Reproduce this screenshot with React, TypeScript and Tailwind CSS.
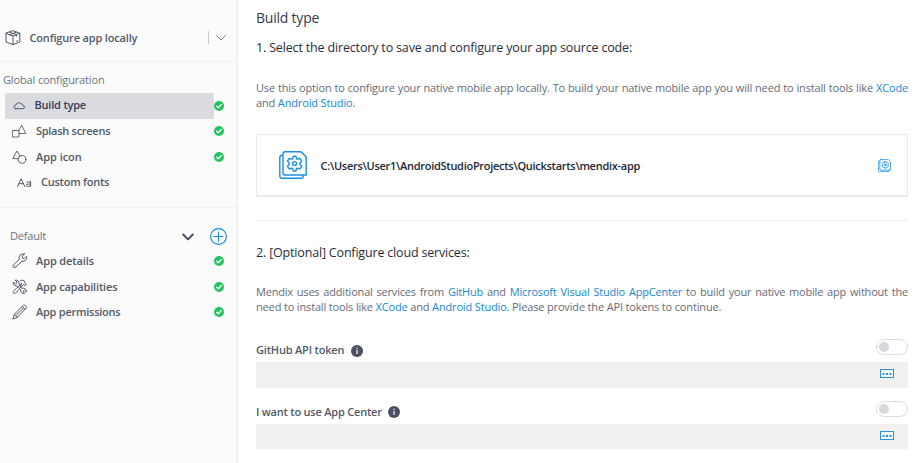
import type { ReactNode } from 'react';

function Svg({ w, h, box, className = '', sw = 1, children }: { w: number; h: number; box?: string; className?: string; sw?: number; children: ReactNode }) {
  return (
    <svg width={w} height={h} viewBox={box ?? `0 0 ${w} ${h}`} fill="none" stroke="currentColor" strokeWidth={sw} strokeLinejoin="round" strokeLinecap="round" className={`shrink-0 ${className}`}>
      {children}
    </svg>
  );
}

const BoxIcon = () => (
  <Svg w={16} h={16} sw={1}>
    <path d="M8 .8 L14.8 3.2 V12 L8 14.6 L1 12 V3.4 Z M1 3.4 L8 6 L14.8 3.2 M8 6 V14.6 M4.5 2.2 L11.3 4.6 V6.5 M4.6 4.7 L11.4 2.2 M11.6 11.2 L12.8 10.8" />
  </Svg>
);
const CloudIcon = () => (
  <Svg w={12} h={9} sw={0.8}>
    <path d="M2.8 7.7 H9.8 A1.6 1.6 0 0 0 9.9 4.5 A1.8 1.8 0 0 0 8 2.8 A2.8 2.8 0 0 0 3 4 A1.85 1.85 0 0 0 2.8 7.7 Z" />
  </Svg>
);
const SplashIcon = () => (
  <Svg w={15} h={15} sw={0.9}>
    <path d="M.8 6.5 H7 V13 H.8 Z M7 9.5 H13.7 L9.7 1.2 L6.9 6.5" />
  </Svg>
);
const ShapesIcon = () => (
  <Svg w={15} h={15} sw={0.9}>
    <path d="M6.6 8.6 H.8 L5 1 L8.2 6.2" />
    <circle cx="10" cy="9.4" r="3.9" />
  </Svg>
);
const WrenchIcon = () => (
  <Svg w={16} h={16} sw={1}>
    <path d="M12.2 1 L10.2 3.4 L10.7 5.2 L12.3 5.6 L14.5 3.3 C15.4 6.6 13 8.9 9.9 8.1 L4 14 C2.2 15.7 -.2 13.5 1.5 11.8 L7.3 6.3 C6.3 3 8.9 .3 12.2 1 Z" />
    <path d="M2.8 12.7 H2.9" />
  </Svg>
);
const ToolsIcon = () => (
  <Svg w={16} h={16} sw={1}>
    <path d="M3.2 1.2 L5 3 L4.6 4.4 L3.2 4.8 L1.3 3 C.6 5.5 2.4 7.2 4.8 6.8 L6.1 8 M8.2 6 L7 4.9 C7.4 2.4 5.7 .6 3.2 1.2" />
    <path d="M8.2 2 L10 1 L12 1.6 L12.8 3.6 L14.4 5 L13.2 6.6 L11.3 5.6 L8.6 8.6 M7 10.3 L3.7 14.1 C2.4 15.6 .1 13.5 1.5 12.1 L9.6 4.3 Z" />
    <path d="M9.2 8.6 L10 9.3 C12.6 8.6 14.8 10.4 14.3 13 L12.4 11.3 L11 12.2 L12.6 14.4 C10 15 8.2 13 8.8 10.7 L7.6 9.6" />
  </Svg>
);
const PencilIcon = () => (
  <Svg w={16} h={16} sw={1}>
    <path d="M1 14.7 L2.3 10.3 L11.3 1.4 C12.5 .3 15.2 2.8 14.1 4.2 L5.4 13.2 Z M2.3 10.3 L5.4 13.2 M10.2 2.5 L13 5.3 M3.8 11.6 L11.6 3.9" />
  </Svg>
);
const FontIcon = () => (
  <Svg w={15} h={10} sw={1}>
    <path d="M.6 8.6 L4.1 .8 L7.8 8.6 M2 5.7 H6.4 M13.6 3.8 V8.6 M9.6 4.2 Q11 3.3 13.6 4 M13.6 6 H11 Q9.2 6.2 9.3 7.4 Q9.7 8.6 11.2 8.5 Q12.8 8.3 13.6 7.2" />
  </Svg>
);
const Check = () => (
  <Svg w={10} h={10} sw={1.4} className="text-white">
    <circle cx="5" cy="5" r="5" fill="#22c55e" stroke="none" />
    <path d="M2.7 5.2 L4.3 6.7 L7.3 3.6" />
  </Svg>
);
const Directory = ({ size, sw }: { size: number; sw: number }) => (
  <Svg w={size} h={size} box="0 0 28 28" sw={sw} className="text-[#1a8fe3]">
    <path d="M6 .8 H22 L27.2 6 V24 H6 Q4 24 4 22 V3 Q4 .8 6 .8 Z M4 4.3 H3 Q.8 4.3 .8 6.5 V25 Q.8 27.2 3 27.2 H22 Q24.2 27.2 24.2 25 V24" />
    <path d="M14.4 5.2 H16.8 L17.8 8.1 L20.9 7.5 L22.7 9.9 L20.8 12.6 L22.7 15.4 L20.9 17.8 L17.8 17.2 L16.8 20 H14.4 L13.4 17.2 L10.3 17.8 L8.5 15.4 L10.4 12.6 L8.5 9.9 L10.3 7.5 L13.4 8.1 Z" />
    <circle cx="15.6" cy="12.6" r="2" />
  </Svg>
);

function Item({ icon, label, done = true, iconPad = 'pl-3', track }: { icon: ReactNode; label: string; done?: boolean; iconPad?: string; track: string }) {
  return (
    <div className={`flex h-[25.6px] items-center pr-[12px] ${iconPad}`}>
      <span className="flex w-6 shrink-0 items-center">{icon}</span>
      <span className={`grow text-[11px] font-semibold ${track}`}>{label}</span>
      {done && <Check />}
    </div>
  );
}

const Link = ({ children }: { children: ReactNode }) => <a className="text-[#1787d8]">{children}</a>;

function Field({ label, track }: { label: string; track: string }) {
  return (
    <div className="h-[61.5px]">
      <div className="flex h-[23px] items-start justify-between">
        <div className="flex h-[23px] items-center gap-[6.5px] text-[11px] font-semibold text-[#525968]">
          <span className={track}>{label}</span>
          <svg width="12" height="12" viewBox="0 0 12 12">
            <circle cx="6" cy="6" r="6" fill="#4b5060" />
            <path d="M6 2.7V4M6 5V9" stroke="#e5e7eb" strokeWidth="1.4" />
          </svg>
        </div>
        <div className="flex h-4 w-8 items-center rounded-full border border-[#dcdde0] bg-white pl-[2px]">
          <div className="size-[10px] rounded-full bg-[#d7d8dd]" />
        </div>
      </div>
      <div className="flex h-[25.5px] items-center justify-end rounded-[1px] bg-[#f2f0ef] pr-[14px] pb-px">
        <svg width="14" height="10" viewBox="0 0 14 10" fill="none" stroke="#2d91dc">
          <rect x=".5" y=".5" width="13" height="8" fill="#f4f9fd" />
          <path d="M2.5 5H4.5M6 5H8M9.5 5H11.5" strokeWidth="2" />
        </svg>
      </div>
    </div>
  );
}

export default function App() {
  return (
    <div className="flex h-[463px] w-[920px] overflow-hidden bg-white font-['Open_Sans','Noto_Sans',sans-serif] whitespace-nowrap text-[#525968]">
      <aside className="h-full w-[238px] shrink-0 border-r-2 border-[#f1f1f2] bg-[#fbfbfb]">
        <div className="flex h-[62px] items-end border-b border-[#f0f0f1] pr-[10px] pb-[15px] pl-[5px]">
          <BoxIcon />
          <span className="ml-[8.5px] grow text-[11px] leading-4 font-semibold tracking-[-0.17px]">Configure app locally</span>
          <span className="mb-[2px] h-[13px] w-px bg-[#c9cbcf]" />
          <Svg w={10} h={6} className="mb-[5px] ml-[7px] text-[#777c88]"><path d="M.7 .7 L5 5 L9.3 .7" /></Svg>
        </div>
        <div className="flex h-[31px] items-center pt-[5px] pl-[3px] text-[11px] tracking-[-0.14px] text-[#6d7280]">Global configuration</div>
        <div className="flex h-[26px] items-center pl-[5px]">
          <div className="flex h-[26px] w-[209px] items-center rounded-[1px] bg-[#dadbdf] pb-px pl-2 text-[11px] font-semibold text-[#343b5c]">
            <CloudIcon />
            <span className="ml-[9.5px] tracking-[-0.2px]">Build type</span>
          </div>
          <Check />
        </div>
        <div className="-mt-[0.4px]">
          <Item icon={<SplashIcon />} label="Splash screens" track="tracking-[-0.28px]" />
          <Item icon={<ShapesIcon />} label="App icon" track="tracking-[-0.05px]" />
          <Item icon={<FontIcon />} label="Custom fonts" done={false} iconPad="pl-[17px]" track="tracking-[-0.25px]" />
        </div>
        <div className="mt-[12px] flex h-[41px] items-end border-t border-[#f0f0f1] pr-[9px] pb-[3.5px] pl-[10px]">
          <span className="grow text-[11px] leading-[18px] tracking-[-0.2px] text-[#6d7280]">Default</span>
          <Svg w={12} h={8} sw={1.8} className="mr-[16px] mb-[4px] text-[#40465a]"><path d="M1.2 1.5 L6 6.3 L10.8 1.5" /></Svg>
          <Svg w={17} h={17} sw={1.1} className="text-[#1787d8]"><circle cx="8.5" cy="8.5" r="7.9" /><path d="M8.5 4 V13 M4 8.5 H13" /></Svg>
        </div>
        <Item icon={<WrenchIcon />} label="App details" track="tracking-[-0.12px]" />
        <Item icon={<ToolsIcon />} label="App capabilities" track="tracking-[-0.17px]" />
        <Item icon={<PencilIcon />} label="App permissions" track="tracking-[-0.25px]" />
      </aside>
      <main className="w-[670px] pl-[18px]">
        <h1 className="flex h-[34px] items-center text-[14px] tracking-[-0.22px] text-[#343a49]">Build type</h1>
        <h2 className="flex h-[28px] items-center pt-px text-[12.5px] tracking-[-0.165px] text-[#272d3d]">1. Select the directory to save and configure your app source code:</h2>
        <div className="mt-[18px] text-[11px] leading-[15px] tracking-[-0.15px] text-[#666b78]">
          <p className="[text-align-last:justify]">Use this option to configure your native mobile app locally. To build your native mobile app you will need to install tools like <Link>XCode</Link></p>
          <p>and <Link>Android Studio</Link>.</p>
        </div>
        <div className="mt-[24px] flex h-[63px] items-center border border-b-2 border-[#e9e9ea] pr-[16px] pl-[22px]">
          <Directory size={28} sw={1.4} />
          <span className="ml-[13.5px] grow pt-[2px] text-[11px] font-semibold tracking-[-0.28px] text-[#222839]">C:\Users\User1\AndroidStudioProjects\Quickstarts\mendix-app</span>
          <Directory size={13} sw={1.7} />
        </div>
        <hr className="mt-[23px] border-[#f0f0f1]" />
        <h2 className="mt-[18px] flex h-[28px] items-center text-[12.5px] tracking-[-0.18px] text-[#272d3d]">2. [Optional] Configure cloud services:</h2>
        <div className="mt-[17px] text-[11px] leading-[15px] tracking-[-0.155px] text-[#666b78]">
          <p className="tracking-[-0.2px] [text-align-last:justify]">Mendix uses additional services from <Link>GitHub</Link> and <Link>Microsoft Visual Studio AppCenter</Link> to build your native mobile app without the</p>
          <p>need to install tools like <Link>XCode</Link> and <Link>Android Studio</Link>. Please provide the API tokens to continue.</p>
        </div>
        <div className="mt-[25px]">
          <Field label="GitHub API token" track="tracking-[-0.19px]" />
          <Field label="I want to use App Center" track="tracking-[-0.21px]" />
        </div>
      </main>
    </div>
  );
}
